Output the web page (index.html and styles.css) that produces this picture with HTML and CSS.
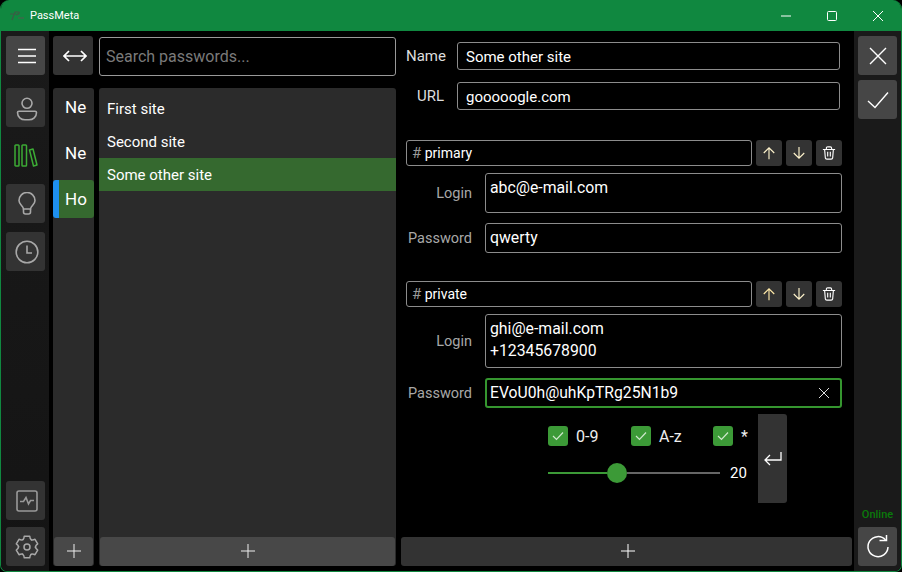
FILE: index.html
```html
<!DOCTYPE html>
<html lang="en">
<head>
<meta charset="utf-8">
<title>PassMeta</title>
<link rel="stylesheet" href="styles.css">
</head>
<body>
<div class="window">
  <header class="titlebar">
    <svg class="logo" width="16" height="12" viewBox="0 0 16 12"><path d="M3 10 L6 2 H10 Q11 4 7 5 M1 4 H7" fill="none" stroke="#3d5a45" stroke-width="1.2"/><path d="M9 8 H15" stroke="#3d6a4a" stroke-width="1.5"/></svg>
    <span class="app-name">PassMeta</span>
    <div class="win-controls">
      <svg width="46" height="30" viewBox="0 0 46 30"><path d="M18 15 H28" stroke="#fff"/></svg>
      <svg width="46" height="30" viewBox="0 0 46 30"><rect x="18.5" y="10.5" width="9" height="9" rx="1" fill="none" stroke="#fff"/></svg>
      <svg width="46" height="30" viewBox="0 0 46 30"><path d="M18 10 L28 20 M28 10 L18 20" stroke="#fff" fill="none"/></svg>
    </div>
  </header>
  <div class="main">
    <nav class="nav">
      <button class="nav-btn light"><svg width="18" height="16" viewBox="0 0 18 16"><path d="M0 1.500 H18 M0 8 H18 M0 14.500 H18" stroke="#fff" stroke-width="1.300"/></svg></button>
      <button class="nav-btn gap-top"><svg width="24" height="26" viewBox="0 0 24 26" fill="none" stroke="#a8a8a8" stroke-width="1.600"><circle cx="12" cy="8.300" r="5"/><path d="M4 16.200 H20 Q21.500 16.200 21.500 17.500 C21.500 22 18 24.800 14 24.800 H10 C6 24.800 2.500 22 2.500 17.500 Q2.500 16.200 4 16.200 Z"/></svg></button>
      <button class="nav-btn plain"><svg width="24" height="23" viewBox="0 0 24 23" fill="none" stroke="#3cab35" stroke-width="1.500"><rect x="1" y="1" width="4" height="21" rx=".8"/><rect x="8" y="1" width="4.500" height="21" rx=".8"/><path d="M15.500 6 L19 5 L23 21 L19.500 22 Z" stroke-linejoin="round"/></svg></button>
      <button class="nav-btn"><svg width="18" height="23" viewBox="0 0 18 23" fill="none" stroke="#a8a8a8" stroke-width="1.600"><path d="M5.500 17 C5 13.500 1 12.500 1 8.500 A8 8 0 0 1 17 8.500 C17 12.500 13 13.500 12.500 17 Z"/><path d="M5.500 17 V20 Q5.500 22 7.500 22 H10.500 Q12.500 22 12.500 20 V17"/></svg></button>
      <button class="nav-btn"><svg width="24" height="24" viewBox="0 0 24 24" fill="none" stroke="#a8a8a8" stroke-width="1.600"><circle cx="12" cy="12" r="10.800"/><path d="M12 5.500 V13 H17"/></svg></button>
      <div class="spacer"></div>
      <button class="nav-btn tight"><svg width="22" height="22" viewBox="0 0 22 22" fill="none" stroke="#999" stroke-width="1.600"><rect x="1" y="1" width="20" height="20" rx="2"/><path d="M4 11.500 H7.500 L10 7.500 L12.500 14 L14.500 10.500 H18"/></svg></button>
      <button class="nav-btn"><svg width="24" height="24" viewBox="0 0 24 24" fill="none" stroke="#a8a8a8" stroke-width="1.500" stroke-linecap="round" stroke-linejoin="round"><path d="M7.800 4.600 Q9 4 9.300 1.200 H14.700 Q15 4 16.200 4.600 L16.500 5"/><path transform="rotate(60 12 12)" d="M7.800 4.600 Q9 4 9.300 1.200 H14.700 Q15 4 16.200 4.600 L16.500 5"/><path transform="rotate(120 12 12)" d="M7.800 4.600 Q9 4 9.300 1.200 H14.700 Q15 4 16.200 4.600 L16.500 5"/><path transform="rotate(180 12 12)" d="M7.800 4.600 Q9 4 9.300 1.200 H14.700 Q15 4 16.200 4.600 L16.500 5"/><path transform="rotate(240 12 12)" d="M7.800 4.600 Q9 4 9.300 1.200 H14.700 Q15 4 16.200 4.600 L16.500 5"/><path transform="rotate(300 12 12)" d="M7.800 4.600 Q9 4 9.300 1.200 H14.700 Q15 4 16.200 4.600 L16.500 5"/><circle cx="12" cy="12" r="3"/></svg></button>
    </nav>

    <div class="sections">
      <button class="square-btn"><svg width="24" height="12" viewBox="0 0 24 12" fill="none" stroke="#fff" stroke-width="1.700"><path d="M1 6 H23 M6 1 L1 6 L6 11 M18 1 L23 6 L18 11"/></svg></button>
      <div class="section-panel">
        <div class="section-item">Ne</div>
        <div class="section-item">Ne</div>
        <div class="section-item active">Ho</div>
        <div class="spacer"></div>
        <button class="add-btn"><svg width="16" height="16" viewBox="0 0 16 16"><path d="M8 1 V15 M1 8 H15" stroke="#eee"/></svg></button>
      </div>
    </div>

    <div class="passwords">
      <input class="search" type="text" placeholder="Search passwords...">
      <div class="list-panel">
        <div class="site">First site</div>
        <div class="site">Second site</div>
        <div class="site selected">Some other site</div>
        <div class="spacer"></div>
        <button class="add-btn"><svg width="16" height="16" viewBox="0 0 16 16"><path d="M8 1 V15 M1 8 H15" stroke="#eee"/></svg></button>
      </div>
    </div>

    <div class="details">
      <div class="top-row"><label class="top-label">Name</label><div class="box top-box">Some other site</div></div>
      <div class="top-row url-row"><label class="top-label">URL</label><div class="box top-box">gooooogle.com</div></div>

      <section class="cell cell-first">
        <div class="cell-head">
          <div class="box tag"><span class="hash">#</span> primary</div>
          <button class="mini"><svg width="14" height="14" viewBox="0 0 16 16" fill="none" stroke="#fff4cc" stroke-width="1.300"><path d="M8 15 V2 M2 8 L8 2 L14 8"/></svg></button>
          <button class="mini"><svg width="14" height="14" viewBox="0 0 16 16" fill="none" stroke="#fff4cc" stroke-width="1.300"><path d="M8 1 V14 M2 8 L8 14 L14 8"/></svg></button>
          <button class="mini"><svg width="14" height="14" viewBox="0 0 16 16" fill="none" stroke="#fff" stroke-width="1.300"><path d="M1 4 H15 M5 4 V2.500 Q5 1 6.500 1 H9.500 Q11 1 11 2.500 V4 M3 4 L3.800 13.500 Q4 15 5.500 15 H10.500 Q12 15 12.200 13.500 L13 4 M6.500 6.500 V12 M9.500 6.500 V12"/></svg></button>
        </div>
        <div class="field login-one"><label>Login</label><div class="box area">abc@e-mail.com</div></div>
        <div class="field pass-one"><label>Password</label><div class="box area">qwerty</div></div>
      </section>

      <section class="cell cell-second">
        <div class="cell-head">
          <div class="box tag"><span class="hash">#</span> private</div>
          <button class="mini"><svg width="14" height="14" viewBox="0 0 16 16" fill="none" stroke="#ffe9a8" stroke-width="1.300"><path d="M8 15 V2 M2 8 L8 2 L14 8"/></svg></button>
          <button class="mini"><svg width="14" height="14" viewBox="0 0 16 16" fill="none" stroke="#fff4cc" stroke-width="1.300"><path d="M8 1 V14 M2 8 L8 14 L14 8"/></svg></button>
          <button class="mini"><svg width="14" height="14" viewBox="0 0 16 16" fill="none" stroke="#fff" stroke-width="1.300"><path d="M1 4 H15 M5 4 V2.500 Q5 1 6.500 1 H9.500 Q11 1 11 2.500 V4 M3 4 L3.800 13.500 Q4 15 5.500 15 H10.500 Q12 15 12.200 13.500 L13 4 M6.500 6.500 V12 M9.500 6.500 V12"/></svg></button>
        </div>
        <div class="field login-two"><label>Login</label><div class="box area">ghi@e-mail.com<br>+12345678900</div></div>
        <div class="field pass-two"><label>Password</label><div class="box area focus"><span>EVoU0h@uhKpTRg25N1b9</span><svg width="12" height="12" viewBox="0 0 12 12"><path d="M1 1 L11 11 M11 1 L1 11" stroke="#ddd" fill="none"/></svg></div></div>
      </section>

      <div class="generator">
        <div class="gen-main">
          <div class="checks">
            <div class="check c1"><span class="tick"><svg width="12" height="10" viewBox="0 0 12 10"><path d="M1 5 L4.500 8.500 L11 1.500" stroke="#cfe8cd" stroke-width="1.200" fill="none"/></svg></span>0-9</div>
            <div class="check c2"><span class="tick"><svg width="12" height="10" viewBox="0 0 12 10"><path d="M1 5 L4.500 8.500 L11 1.500" stroke="#cfe8cd" stroke-width="1.200" fill="none"/></svg></span>A-z</div>
            <div class="check"><span class="tick"><svg width="12" height="10" viewBox="0 0 12 10"><path d="M1 5 L4.500 8.500 L11 1.500" stroke="#cfe8cd" stroke-width="1.200" fill="none"/></svg></span>*</div>
          </div>
          <div class="slider-row">
            <div class="track"><span class="track-fill"></span><span class="thumb"></span><span class="track-rest"></span></div>
            <span class="count">20</span>
          </div>
        </div>
        <button class="enter"><svg width="18" height="14" viewBox="0 0 18 14" fill="none" stroke="#fff" stroke-width="1.300"><path d="M17 0 V8 H1 M6 3 L1 8 L6 13"/></svg></button>
      </div>
      <div class="spacer"></div>
      <button class="add-btn wide"><svg width="16" height="16" viewBox="0 0 16 16"><path d="M8 1 V15 M1 8 H15" stroke="#fff"/></svg></button>
    </div>

    <aside class="actions">
      <button class="nav-btn light"><svg width="18" height="18" viewBox="0 0 18 18"><path d="M1 1 L17 17 M17 1 L1 17" stroke="#fff" stroke-width="1.400" fill="none"/></svg></button>
      <button class="nav-btn light"><svg width="22" height="18" viewBox="0 0 22 18"><path d="M1 10 L8 16.500 L21 1.500" stroke="#fff" stroke-width="1.400" fill="none"/></svg></button>
      <div class="spacer"></div>
      <div class="online">Online</div>
      <button class="nav-btn light"><svg width="24" height="24" viewBox="0 0 24 24" fill="none" stroke="#fff" stroke-width="1.500"><path d="M19.500 5 A10 10 0 1 0 22 12"/><path d="M13.500 5.500 H20.500 V0"/></svg></button>
    </aside>
  </div>
</div>
</body>
</html>
```

FILE: styles.css
```css
* { box-sizing: border-box; }
html, body { margin: 0; padding: 0; background: #000; }
body { width: 902px; height: 572px; overflow: hidden; font-family: Roboto, "Liberation Sans", sans-serif; color: #fff; }
button { padding: 0; border: 0; font: inherit; color: inherit; display: flex; align-items: center; justify-content: center; }
svg { display: block; flex: none; }
label { display: block; }
.spacer { flex: 1; }

.window { width: 902px; height: 572px; display: flex; flex-direction: column; background: #000; border: 1px solid #108840; border-top: 0; border-radius: 9px 9px 7px 7px; overflow: hidden; }
.titlebar { height: 31px; flex: none; background: #108840; display: flex; align-items: center; padding-left: 9px; margin: 0 -1px; }
.logo { margin-right: 5px; }
.app-name { font-size: 11px; }
.win-controls { margin-left: auto; display: flex; margin-right: 1px; }

.main { flex: 1; display: flex; min-height: 0; }
.nav { width: 48px; flex: none; background: linear-gradient(#1a1a1a, #141414); display: flex; flex-direction: column; padding: 5px 4px 5px 5px; }
.actions { width: 47px; flex: none; background: #1a1a1a; display: flex; flex-direction: column; align-items: center; padding: 5px 0; margin-left: 2px; }
.nav-btn { width: 39px; height: 39px; flex: none; background: #333; border-radius: 3px; margin-bottom: 9px; }
.nav .nav-btn { padding-left: 2px; }
.nav-btn:last-child { margin-bottom: 0; }
.nav-btn.light { background: #464646; }
.nav-btn.gap-top { margin-top: 4px; }
.nav-btn.plain { background: transparent; height: 41px; margin: -1px 0 8px; padding-left: 0; }
.nav-btn.tight { margin-bottom: 7px; }
.actions .nav-btn { margin-bottom: 5px; }
.actions .nav-btn:last-child { margin-bottom: 0; }
.online { font-size: 11px; color: #0a7a0a; font-weight: 500; margin-bottom: 6px; }

.sections { width: 41px; flex: none; margin-left: 4px; padding: 5px 0; display: flex; flex-direction: column; }
.square-btn { width: 40px; height: 39px; flex: none; background: #333; border-radius: 3px; padding-left: 3px; }
.section-panel { margin-top: 13px; flex: 1; background: #2b2b2b; border-radius: 3px; display: flex; flex-direction: column; }
.section-item { height: 46px; flex: none; padding: 0 0 8px 12px; display: flex; align-items: center; font-size: 17px; }
.section-item.active { height: 38px; background: #35692f; border-left: 6px solid #1e90f0; padding: 0 0 0 6px; border-radius: 3px; }
.add-btn { height: 29px; flex: none; background: #484848; border-radius: 3px; margin: 0 1px; padding-bottom: 2px; }

.passwords { width: 297px; flex: none; margin-left: 5px; padding: 5px 0; display: flex; flex-direction: column; }
.search { height: 39px; flex: none; width: 100%; background: #000; border: 1px solid #999; border-radius: 3px; padding: 0 6px; margin-top: 1px; color: #fff; font: 16px Roboto, sans-serif; outline: 0; }
.search::placeholder { color: #7a7a7a; opacity: 1; }
.list-panel { margin-top: 12px; flex: 1; background: #2b2b2b; border-radius: 3px; display: flex; flex-direction: column; padding-top: 4px; }
.site { height: 33px; flex: none; padding-left: 8px; display: flex; align-items: center; font-size: 15px; }
.site.selected { background: #35692f; }

.details { width: 451px; flex: none; margin-left: 5px; padding: 11px 0 5px; display: flex; flex-direction: column; }
.box { background: #000; border: 1px solid #8c8c8c; border-radius: 3px; color: #fff; }
.top-row { display: flex; align-items: center; width: 439px; padding-left: 5px; }
.url-row { margin-top: 12px; }
.top-label { width: 38px; flex: none; margin-right: 13px; font-size: 15px; color: #ddd; text-align: right; }
.top-box { flex: 1; height: 28px; padding: 1px 8px 0; display: flex; align-items: center; font-size: 15px; }

.cell { width: 436px; margin-left: 5px; }
.cell-first { margin-top: 30px; }
.cell-second { margin-top: 28px; }
.cell-head { display: flex; align-items: center; gap: 4px; height: 26px; }
.tag { flex: 1; height: 26px; padding: 0 5px; display: flex; align-items: center; font-size: 14px; white-space: pre; }
.hash { color: #9a9a9a; font-size: 15px; }
.mini { width: 26px; height: 26px; flex: none; background: #333; border-radius: 3px; }
.field { display: flex; align-items: center; }
.field label { width: 66px; text-align: right; color: #a8a8a8; font-size: 14.500px; margin-right: 13px; }
.area { flex: 1; padding: 3px 4px 0; font-size: 15.800px; line-height: 22px; }
.login-one { margin-top: 7px; height: 40px; }
.login-one label { padding-top: 1px; }
.login-one .area { height: 40px; }
.pass-one { margin-top: 10px; height: 30px; }
.pass-one .area { height: 30px; padding-top: 0; display: flex; align-items: center; }
.login-two { margin-top: 7px; height: 54px; }
.login-two .area { height: 54px; }
.pass-two { margin-top: 10px; height: 30px; }
.pass-two .area { height: 30px; font-size: 15.700px; display: flex; align-items: center; justify-content: space-between; padding: 0 10px 0 3px; border: 2px solid #35962f; }

.generator { display: flex; margin: 6px 0 0 147px; height: 89px; }
.gen-main { width: 200px; padding-top: 12px; }
.checks { display: flex; font-size: 16px; }
.check { display: flex; align-items: center; gap: 8px; color: #eee; }
.check.c1 { width: 83px; }
.check.c2 { width: 82px; }
.tick { width: 20px; height: 20px; background: #3c9a37; border-radius: 3px; display: flex; align-items: center; justify-content: center; }
.slider-row { display: flex; align-items: center; margin-top: 17px; height: 20px; }
.track { width: 172px; display: flex; align-items: center; flex: none; }
.track-fill { width: 59px; height: 2px; background: #3c9a37; }
.thumb { width: 20px; height: 20px; border-radius: 50%; background: #3c9a37; flex: none; }
.track-rest { flex: 1; height: 2px; background: #666; }
.count { margin-left: 10px; font-size: 15px; }
.enter { width: 29px; height: 89px; background: #333; border-radius: 0 3px 3px 0; margin-left: 10px; }
.add-btn.wide { margin: 0; width: 451px; background: #333; padding-left: 2px; }
```
